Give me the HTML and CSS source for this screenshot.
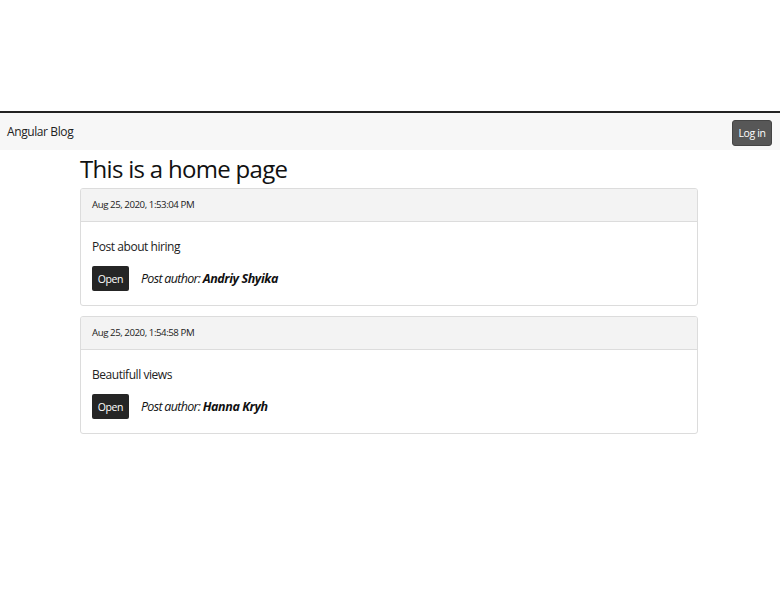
FILE: index.html
```html
<!DOCTYPE html>
<html>
<head>
<meta charset="utf-8">
<link rel="stylesheet" href="styles.css">
</head>
<body>
<div class="spacer"></div>
<nav class="navbar">
  <span class="brand">Angular Blog</span>
  <button class="btn-login">Log in</button>
</nav>
<main class="container">
  <h1 class="title">This is a home page</h1>
  <div class="card">
    <div class="card-header">Aug 25, 2020, 1:53:04 PM</div>
    <div class="card-body">
      <p class="post-title">Post about hiring</p>
      <div class="post-row">
        <button class="btn-open">Open</button>
        <span class="author">Post author: <strong>Andriy Shyika</strong></span>
      </div>
    </div>
  </div>
  <div class="card">
    <div class="card-header">Aug 25, 2020, 1:54:58 PM</div>
    <div class="card-body">
      <p class="post-title">Beautifull views</p>
      <div class="post-row">
        <button class="btn-open">Open</button>
        <span class="author">Post author: <strong>Hanna Kryh</strong></span>
      </div>
    </div>
  </div>
</main>
</body>
</html>
```
FILE: styles.css
```css
html, body {
  margin: 0;
  padding: 0;
  background: #fff;
  font-family: "Open Sans", "Noto Sans", sans-serif;
  color: #111;
}
.spacer {
  height: 111px;
}
.navbar {
  border-top: 2px solid #222;
  background: #f7f7f7;
  height: 37px;
  display: flex;
  align-items: center;
  justify-content: space-between;
  padding: 0 8px 0 7px;
}
.brand {
  font-size: 12px;
  letter-spacing: -0.4px;
  color: #222;
}
.btn-login {
  background: #575757;
  color: #fff;
  border: 1px solid #444;
  border-radius: 3px;
  font-family: inherit;
  font-size: 10.5px;
  letter-spacing: -0.4px;
  height: 26px;
  width: 40px;
  padding: 0;
  margin-top: 2px;
}
.container {
  width: 618px;
  margin: 0 auto 0 80px;
}
.title {
  font-size: 24px;
  font-weight: 400;
  letter-spacing: -0.7px;
  margin: 3px 0 3px;
  line-height: 32px;
}
.card {
  border: 1px solid #dcdcdc;
  border-radius: 3px;
  margin-bottom: 10px;
  overflow: hidden;
}
.card-header {
  background: #f3f3f3;
  border-bottom: 1px solid #dcdcdc;
  height: 32px;
  line-height: 32px;
  padding: 0 11px;
  font-size: 9.7px;
  letter-spacing: -0.45px;
  color: #222;
}
.card-body {
  padding: 16px 11px 14px;
}
.post-title {
  margin: 0 0 11px;
  font-size: 12px;
  letter-spacing: -0.45px;
  line-height: 17px;
  color: #222;
}
.post-row {
  display: flex;
  align-items: center;
  gap: 12px;
}
.btn-open {
  background: #252525;
  color: #fff;
  border: none;
  border-radius: 2px;
  font-family: inherit;
  font-size: 10.5px;
  letter-spacing: -0.4px;
  width: 37px;
  height: 25px;
  padding: 0;
}
.author {
  font-style: italic;
  font-size: 12.5px;
  letter-spacing: -0.7px;
  color: #111;
}
.author strong {
  font-weight: 700;
  letter-spacing: -0.4px;
}
```
